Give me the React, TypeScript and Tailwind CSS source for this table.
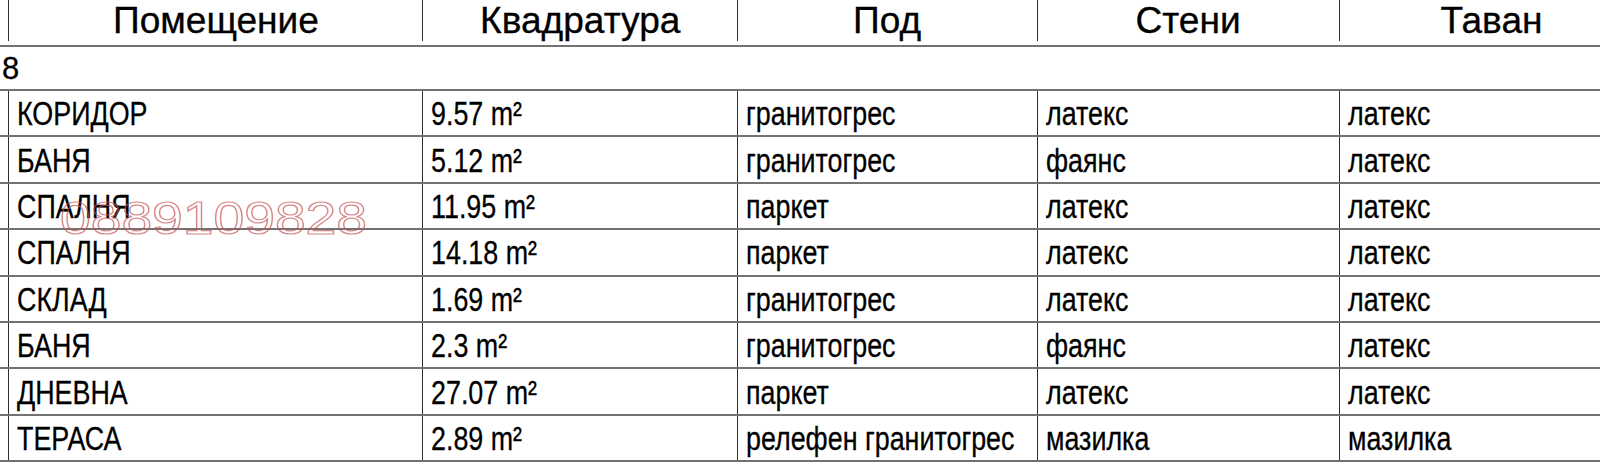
const header = ['Помещение', 'Квадратура', 'Под', 'Стени', 'Таван'];
const widths = ['w-[414px]', 'w-[315px]', 'w-[300px]', 'w-[302px]', 'w-[304px]'];

const rooms = [
  ['КОРИДОР', '9.57 m²', 'гранитогрес', 'латекс', 'латекс'],
  ['БАНЯ', '5.12 m²', 'гранитогрес', 'фаянс', 'латекс'],
  ['СПАЛНЯ', '11.95 m²', 'паркет', 'латекс', 'латекс'],
  ['СПАЛНЯ', '14.18 m²', 'паркет', 'латекс', 'латекс'],
  ['СКЛАД', '1.69 m²', 'гранитогрес', 'латекс', 'латекс'],
  ['БАНЯ', '2.3 m²', 'гранитогрес', 'фаянс', 'латекс'],
  ['ДНЕВНА', '27.07 m²', 'паркет', 'латекс', 'латекс'],
  ['ТЕРАСА', '2.89 m²', 'релефен гранитогрес', 'мазилка', 'мазилка'],
];

export default function App() {
  return (
    <div className="relative h-[466px] w-[1600px] overflow-hidden bg-white font-['Liberation_Sans',Arial,sans-serif] text-black">
      <div className="w-[1650px]">
        {/* header */}
        <div className="flex h-[47px] border-b-2 border-[#727272] pb-1 pl-2">
          {header.map((h, i) => (
            <div key={h} className={`flex shrink-0 items-center justify-center border-l border-[#2e2e2e] ${widths[i]}`}>
              <span className="scale-x-[1.03] whitespace-nowrap text-[36px] leading-none [-webkit-text-stroke:0.3px_#000]">{h}</span>
            </div>
          ))}
        </div>

        {/* floor row */}
        <div className="flex h-[44px] items-center border-b-2 border-[#727272] pl-[2px]">
          <span className="text-[31px] leading-none [-webkit-text-stroke:0.3px_#000]">8</span>
        </div>

        {rooms.map((r, ri) => (
          <div key={ri} className="flex h-[46.4px] border-b-2 border-[#727272] pl-2">
            {r.map((c, i) => (
              <div key={i} className={`flex shrink-0 items-center border-l border-[#2e2e2e] pl-2 ${widths[i]}`}>
                <span className="origin-left scale-x-[0.79] whitespace-nowrap text-[34px] leading-none [-webkit-text-stroke:0.3px_#000]">{c}</span>
              </div>
            ))}
          </div>
        ))}
      </div>

      {/* watermark */}
      <div className="pointer-events-none absolute left-[60px] top-[195px] origin-left scale-x-[1.2] text-[46px] leading-none text-transparent [-webkit-text-stroke:1.2px_rgba(196,84,84,0.7)]">
        0889109828
      </div>
    </div>
  );
}
